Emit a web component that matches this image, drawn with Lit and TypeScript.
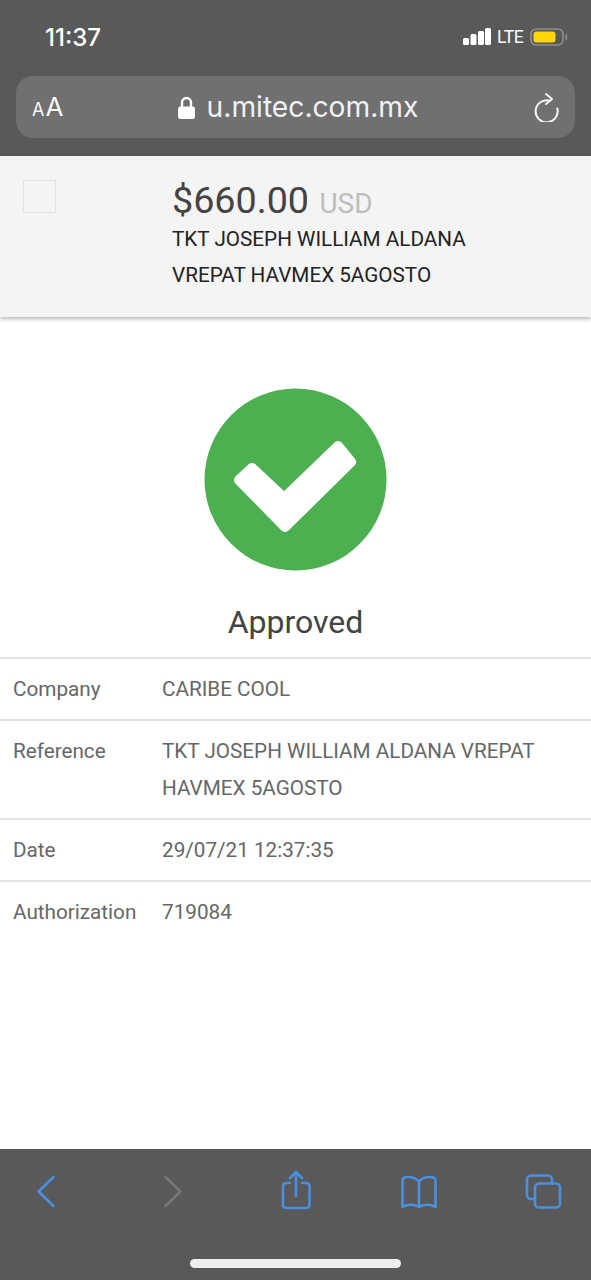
import { LitElement, html, css } from "lit";
import { customElement } from "lit/decorators.js";

@customElement("app-root")
export class AppRoot extends LitElement {
  static styles = css`
    :host {
      display: grid;
      grid-template-rows: auto 1fr auto;
      width: 591px;
      height: 1280px;
      overflow: hidden;
      background: #fff;
      font-family: Roboto, sans-serif;
    }
    .chrome {
      background: #595959;
      color: #fff;
      height: 156px;
      box-sizing: border-box;
      padding: 0 16px;
      display: flex;
      flex-direction: column;
    }
    .status {
      height: 76px;
      display: flex;
      align-items: center;
      justify-content: space-between;
      padding: 0 7px 2px 29px;
      box-sizing: border-box;
    }
    .time {
      font: 500 24px Inter, sans-serif;
    }
    .indicators {
      display: flex;
      align-items: center;
      gap: 6px;
    }
    .lte {
      font: 400 17.5px Roboto, sans-serif;
      letter-spacing: -0.4px;
      width: 27px;
    }
    .urlbar {
      height: 62px;
      border-radius: 17px;
      background: #707070;
      display: grid;
      grid-template-columns: 1fr auto 1fr;
      align-items: center;
      padding: 0 16px;
    }
    .aa {
      font-family: Inter, sans-serif;
      line-height: 1;
      color: #f8f8f8;
    }
    .aa .s { font-size: 18px; }
    .aa .l { font-size: 26px; margin-left: 1px; }
    .address {
      display: flex;
      align-items: center;
      gap: 12px;
      font: 400 28.2px Inter, sans-serif;
      color: #f2f2f2;
      padding-left: 5px;
    }
    .reload { justify-self: end; display: block; }
    .content {
      display: flex;
      flex-direction: column;
    }
    .summary {
      height: 161px;
      box-sizing: border-box;
      background: #f4f4f4;
      box-shadow: 0 2px 4px rgba(0, 0, 0, 0.28);
      display: flex;
      padding: 24px 0 0 23px;
    }
    .checkbox {
      width: 33px;
      height: 33px;
      box-sizing: border-box;
      border: 1.5px solid #e2e2e2;
      margin-right: 116px;
    }
    .amount {
      font-size: 37.7px;
      line-height: 40px;
      color: #444;
      margin-bottom: -3px;
    }
    .currency {
      font-size: 28px;
      color: #bdbdbd;
      margin-left: 1px;
    }
    .desc {
      font-size: 20.7px;
      line-height: 36px;
      color: #222;
    }
    .result {
      display: flex;
      flex-direction: column;
      align-items: center;
      padding-top: 71px;
    }
    .result svg { display: block; }
    .approved {
      font-size: 32px;
      line-height: 40px;
      color: #444;
      margin-top: 31px;
      margin-bottom: 15px;
    }
    .rows { display: flex; flex-direction: column; }
    .row {
      display: grid;
      grid-template-columns: 149px 1fr;
      border-top: 2px solid #e2e2e2;
      padding: 12px 40px 11px 13px;
      font-size: 20.7px;
      line-height: 37px;
      color: #666;
    }
    .toolbar {
      height: 131px;
      box-sizing: border-box;
      background: #595959;
      padding-top: 20px;
      display: flex;
      flex-direction: column;
    }
    .buttons {
      display: grid;
      grid-template-columns: 127px 123px 123.5px 124px 40px;
      padding-left: 25.5px;
    }
    .buttons svg {
      display: block;
      width: 40px;
      height: 44px;
      fill: none;
      stroke: #4a90e2;
      stroke-width: 2.6;
      stroke-linecap: round;
      stroke-linejoin: round;
    }
    .buttons svg.off { stroke: #777; }
    .home {
      width: 211px;
      height: 9px;
      border-radius: 5px;
      background: #eee;
      margin: 46px auto 0;
    }
  `;

  render() {
    return html`
      <div class="chrome">
        <div class="status">
          <span class="time">11:37</span>
          <div class="indicators">
            <svg width="28" height="18" viewBox="0 0 28 18" fill="#fff">
              <rect x="0" y="10" width="6" height="7" rx="1.5"></rect>
              <rect x="7.5" y="6" width="6" height="11" rx="1.5"></rect>
              <rect x="15" y="3" width="6" height="14" rx="1.5"></rect>
              <rect x="22" y="0" width="6" height="17" rx="1.5"></rect>
            </svg>
            <span class="lte">LTE</span>
            <svg width="38" height="18" viewBox="0 0 38 18">
              <rect x="1" y="1" width="32" height="16" rx="5" fill="none" stroke="#8f8f8f" stroke-width="1.6"></rect>
              <rect x="3.5" y="3.5" width="22" height="11" rx="3" fill="#ffd60a"></rect>
              <rect x="35.5" y="6" width="1.6" height="6" rx="0.8" fill="#8f8f8f"></rect>
            </svg>
          </div>
        </div>
        <div class="urlbar">
          <div class="aa"><span class="s">A</span><span class="l">A</span></div>
          <div class="address">
            <svg width="17" height="23" viewBox="0 0 17 23">
              <path d="M4 12V6.5a4.5 4.5 0 0 1 9 0V12" fill="none" stroke="#fff" stroke-width="2.4"></path>
              <rect x="0" y="10.5" width="17" height="12.5" rx="2.2" fill="#fff"></rect>
            </svg>
            <span>u.mitec.com.mx</span>
          </div>
          <svg class="reload" width="26" height="30" viewBox="0 0 26 30" fill="none" stroke="#f6f6f6" stroke-width="2" stroke-linecap="round" stroke-linejoin="round">
            <path d="M17 8.8A11 11 0 1 0 24.3 16.5"></path>
            <path d="M13 2L19 7L13 12"></path>
          </svg>
        </div>
      </div>
      <div class="content">
        <div class="summary">
          <div class="checkbox"></div>
          <div>
            <div class="amount">$660.00 <span class="currency">USD</span></div>
            <div class="desc">TKT JOSEPH WILLIAM ALDANA<br />VREPAT HAVMEX 5AGOSTO</div>
          </div>
        </div>
        <div class="result">
          <svg width="183" height="183" viewBox="204 388 183 183">
            <circle cx="295.5" cy="479.5" r="91" fill="#4caf50"></circle>
            <path d="M239 480L252 468L284 498L338 446L351 462L285 527Z" fill="#fff" stroke="#fff" stroke-width="10" stroke-linejoin="round"></path>
          </svg>
          <div class="approved">Approved</div>
        </div>
        <div class="rows">
          <div class="row"><span>Company</span><span>CARIBE COOL</span></div>
          <div class="row"><span>Reference</span><span>TKT JOSEPH WILLIAM ALDANA VREPAT HAVMEX 5AGOSTO</span></div>
          <div class="row"><span>Date</span><span>29/07/21 12:37:35</span></div>
          <div class="row"><span>Authorization</span><span>719084</span></div>
        </div>
      </div>
      <div class="toolbar">
        <div class="buttons">
          <svg viewBox="0 0 40 44"><path d="M27.5 8L12.5 22.5L27.5 37"></path></svg>
          <svg class="off" viewBox="0 0 40 44"><path d="M12.5 8L27.5 22.5L12.5 37"></path></svg>
          <svg viewBox="0 0 40 44">
            <path d="M20 3V27M14 9L20 3L26 9"></path>
            <path d="M14 14H10a3 3 0 0 0-3 3V36a3 3 0 0 0 3 3H30.5a3 3 0 0 0 3-3V17a3 3 0 0 0-3-3H26"></path>
          </svg>
          <svg viewBox="0 0 40 44">
            <path d="M20 13C18 9 13 8 8 8C5 8 3.5 9 3.5 12V38C8 35 16 35 20 38C24 35 32 35 36.5 38V12C36.5 9 35 8 32 8C27 8 22 9 20 13ZM20 13V37"></path>
          </svg>
          <svg viewBox="0 0 40 44">
            <rect x="12" y="14.5" width="25" height="24" rx="4"></rect>
            <path d="M29 14.5V10.5a4 4 0 0 0-4-4H8a4 4 0 0 0-4 4V26a4 4 0 0 0 4 4H12"></path>
          </svg>
        </div>
        <div class="home"></div>
      </div>
    `;
  }
}
